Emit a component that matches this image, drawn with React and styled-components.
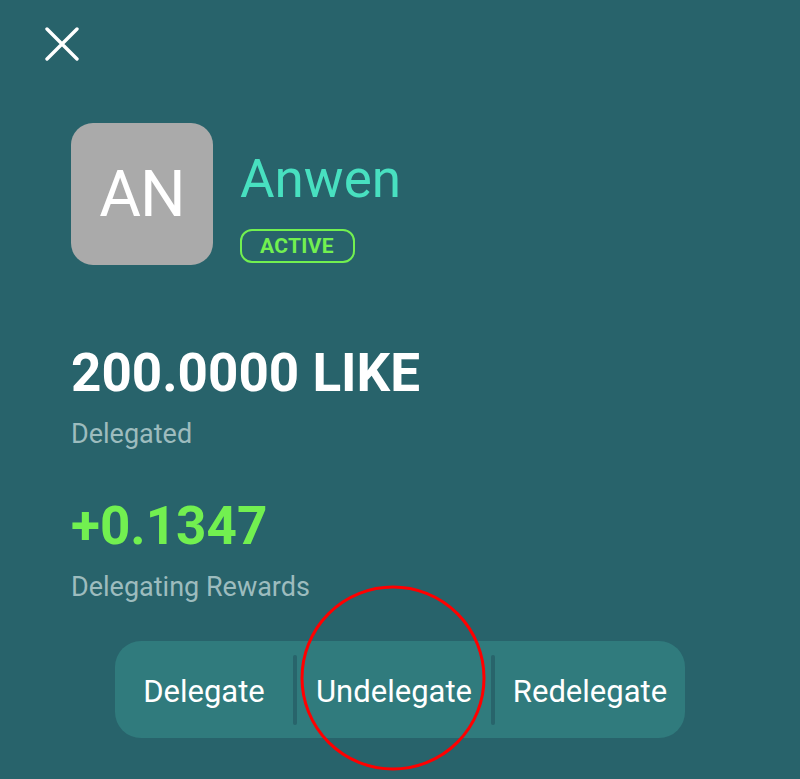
import styled, { createGlobalStyle } from "styled-components"

const GlobalStyle = createGlobalStyle`
  html, body {
    margin: 0;
    padding: 0;
    background: #28636b;
  }
  body {
    font-family: Roboto, "Liberation Sans", sans-serif;
  }
`

const Page = styled.div`
  position: relative;
  width: 800px;
  height: 779px;
  overflow: hidden;
  background: #28636b;
  box-sizing: border-box;
  padding: 27px 0 0 45px;
`

const CloseButton = styled.button`
  display: block;
  width: 34px;
  height: 34px;
  padding: 0;
  border: none;
  background: none;
  cursor: pointer;
`

const Content = styled.div`
  padding: 62px 0 0 26px;
`

const Header = styled.div`
  display: flex;
  align-items: flex-start;
  gap: 27px;
`

const Avatar = styled.div`
  width: 142px;
  height: 142px;
  border-radius: 22px;
  background: #aaaaaa;
  color: #ffffff;
  font-size: 64px;
  display: flex;
  align-items: center;
  justify-content: center;
  letter-spacing: -1px;
`

const NameBlock = styled.div`
  display: flex;
  flex-direction: column;
  align-items: flex-start;
  padding-top: 21px;
`

const Name = styled.div`
  font-size: 53px;
  line-height: 70px;
  color: #48e0c0;
`

const Badge = styled.span`
  margin-top: 15px;
  border: 2px solid #72f050;
  border-radius: 12px;
  color: #72f050;
  font-weight: 700;
  font-size: 21px;
  line-height: 30px;
  padding: 0 19px 0 18px;
  letter-spacing: 0.3px;
`

const Stat = styled.div`
  margin-top: ${(p) => p.$top}px;
`

const Amount = styled.div`
  font-size: 53px;
  font-weight: 700;
  line-height: 62px;
  color: ${(p) => (p.$green ? "#72f050" : "#ffffff")};
`

const Label = styled.div`
  margin-top: 14px;
  font-size: 27px;
  line-height: 32px;
  color: #9dbcbe;
`

const ActionBar = styled.div`
  margin: 38px 0 0 44px;
  width: 570px;
  height: 97px;
  border-radius: 26px;
  background: #307b7d;
  display: flex;
  align-items: center;
`

const Action = styled.button`
  flex: ${(p) => p.$flex};
  height: 100%;
  border: none;
  background: none;
  color: #ffffff;
  font-family: Roboto, "Liberation Sans", sans-serif;
  font-size: 31px;
  padding: 4px 0 0;
  cursor: pointer;
`

const Divider = styled.div`
  width: 4px;
  height: 70px;
  border-radius: 2px;
  background: #28646b;
`

const Annotation = styled.svg`
  position: absolute;
  left: 300px;
  top: 584px;
  pointer-events: none;
`

export default function App() {
  return (
    <>
      <GlobalStyle />
      <Page>
        <CloseButton aria-label="Close">
          <svg width="34" height="34" viewBox="0 0 34 34">
            <path
              d="M2 2 L32 32 M32 2 L2 32"
              stroke="#ffffff"
              strokeWidth="3.4"
              strokeLinecap="round"
            />
          </svg>
        </CloseButton>
        <Content>
          <Header>
            <Avatar>AN</Avatar>
            <NameBlock>
              <Name>Anwen</Name>
              <Badge>ACTIVE</Badge>
            </NameBlock>
          </Header>
          <Stat $top={77}>
            <Amount>200.0000 LIKE</Amount>
            <Label>Delegated</Label>
          </Stat>
          <Stat $top={45}>
            <Amount $green>+0.1347</Amount>
            <Label>Delegating Rewards</Label>
          </Stat>
          <ActionBar>
            <Action $flex="178">Delegate</Action>
            <Divider />
            <Action $flex="194">Undelegate</Action>
            <Divider />
            <Action $flex="190">Redelegate</Action>
          </ActionBar>
        </Content>
        <Annotation width="190" height="190" viewBox="0 0 190 190">
          <ellipse cx="93" cy="94" rx="91" ry="91" fill="none" stroke="#ff0000" strokeWidth="3" />
        </Annotation>
      </Page>
    </>
  )
}
